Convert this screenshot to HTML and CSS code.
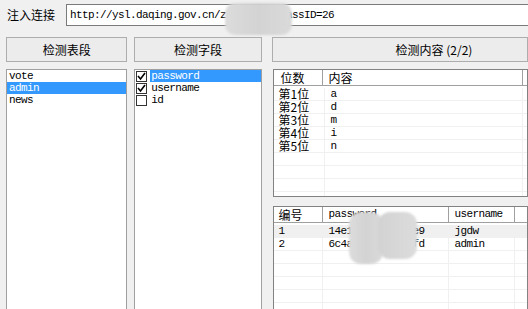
FILE: index.html
```html
<!DOCTYPE html>
<html lang="zh-CN">
<head>
  <meta charset="UTF-8">
  <title>注入检测</title>
  <link rel="stylesheet" href="styles.css">
</head>
<body>
  <div class="app">
    <div class="url-row">
      <span class="url-label">注入连接</span>
      <div class="url-box">http://ysl.daqing.gov.cn/zxxx.asp?ClassID=26</div>
    </div>

    <div class="panes">
      <div class="pane pane-tables">
        <div class="btn">检测表段</div>
        <div class="listbox">
          <div class="item">vote</div>
          <div class="item selected">admin</div>
          <div class="item">news</div>
        </div>
      </div>

      <div class="pane pane-fields">
        <div class="btn">检测字段</div>
        <div class="listbox">
          <div class="check-item">
            <span class="box"><svg width="9" height="9" viewBox="0 0 9 9"><polyline points="1,4 3.5,7 8,1" fill="none" stroke="#000" stroke-width="1.6"/></svg></span>
            <span class="check-text selected">password</span>
          </div>
          <div class="check-item">
            <span class="box"><svg width="9" height="9" viewBox="0 0 9 9"><polyline points="1,4 3.5,7 8,1" fill="none" stroke="#000" stroke-width="1.6"/></svg></span>
            <span class="check-text">username</span>
          </div>
          <div class="check-item">
            <span class="box"></span>
            <span class="check-text">id</span>
          </div>
        </div>
      </div>

      <div class="pane pane-content">
        <div class="btn btn-content">检测内容 (2/2)</div>

        <div class="grid grid-chars">
          <div class="grid-head">
            <div class="hcell c-pos cjk">位数</div>
            <div class="hcell c-val cjk">内容</div>
            <div class="hcell c-fill"></div>
          </div>
          <div class="grid-body">
            <div class="grow"><div class="cell c-pos cjk">第1位</div><div class="cell c-val">a</div><div class="cell c-fill"></div></div>
            <div class="grow"><div class="cell c-pos cjk">第2位</div><div class="cell c-val">d</div><div class="cell c-fill"></div></div>
            <div class="grow"><div class="cell c-pos cjk">第3位</div><div class="cell c-val">m</div><div class="cell c-fill"></div></div>
            <div class="grow"><div class="cell c-pos cjk">第4位</div><div class="cell c-val">i</div><div class="cell c-fill"></div></div>
            <div class="grow"><div class="cell c-pos cjk">第5位</div><div class="cell c-val">n</div><div class="cell c-fill"></div></div>
            <div class="grow"><div class="cell c-pos"></div><div class="cell c-val"></div><div class="cell c-fill"></div></div>
            <div class="grow"><div class="cell c-pos"></div><div class="cell c-val"></div><div class="cell c-fill"></div></div>
            <div class="grow"><div class="cell c-pos"></div><div class="cell c-val"></div><div class="cell c-fill"></div></div>
            <div class="grow"><div class="cell c-pos"></div><div class="cell c-val"></div><div class="cell c-fill"></div></div>
          </div>
        </div>

        <div class="grid grid-rows">
          <div class="grid-head">
            <div class="hcell c-id cjk">编号</div>
            <div class="hcell c-pass">password</div>
            <div class="hcell c-user">username</div>
            <div class="hcell c-fill"></div>
          </div>
          <div class="grid-body">
            <div class="grow current"><div class="cell c-id">1</div><div class="cell c-pass">14e1b600b1fd57e9</div><div class="cell c-user">jgdw</div><div class="cell c-fill"></div></div>
            <div class="grow"><div class="cell c-id">2</div><div class="cell c-pass">6c4a9f2e81b03dfd</div><div class="cell c-user">admin</div><div class="cell c-fill"></div></div>
            <div class="grow"><div class="cell c-id"></div><div class="cell c-pass"></div><div class="cell c-user"></div><div class="cell c-fill"></div></div>
            <div class="grow"><div class="cell c-id"></div><div class="cell c-pass"></div><div class="cell c-user"></div><div class="cell c-fill"></div></div>
            <div class="grow"><div class="cell c-id"></div><div class="cell c-pass"></div><div class="cell c-user"></div><div class="cell c-fill"></div></div>
            <div class="grow"><div class="cell c-id"></div><div class="cell c-pass"></div><div class="cell c-user"></div><div class="cell c-fill"></div></div>
            <div class="grow"><div class="cell c-id"></div><div class="cell c-pass"></div><div class="cell c-user"></div><div class="cell c-fill"></div></div>
          </div>
        </div>
      </div>
    </div>

    <!-- privacy blur over the url and the hashes -->
    <div class="mask mask-url"></div>
    <div class="mask mask-hash-a"></div>
    <div class="mask mask-hash-b"></div>
  </div>
</body>
</html>
```

FILE: styles.css
```css
* { box-sizing: border-box; margin: 0; padding: 0; }

body {
  background: #f0f0f0;
  font-family: "Liberation Mono", "Noto Sans CJK SC", monospace;
  font-size: 11px;
  letter-spacing: -0.6px;
  color: #000;
  overflow: hidden;
}

.cjk,
.url-label,
.btn {
  font-family: "Noto Sans CJK SC", sans-serif;
  font-size: 12px;
  letter-spacing: 0;
}

.app {
  position: relative;
  width: 528px;
  height: 309px;
  overflow: hidden;
}

/* top url row */
.url-row {
  display: flex;
  align-items: center;
  padding: 4px 0 0 7px;
}

.url-label {
  width: 59px;
  line-height: 22px;
}

.url-box {
  flex: 1;
  height: 22px;
  background: #fff;
  border: 1px solid #7a7a7a;
  border-right: none;
  padding-left: 3px;
  line-height: 20px;
  white-space: nowrap;
}

/* three panes */
.panes {
  display: flex;
  height: 283px;
  margin-top: 11px;
  padding-left: 6px;
}

.pane {
  display: flex;
  flex-direction: column;
}

.pane-tables { width: 122px; }
.pane-fields { width: 128px; margin-left: 7px; }
.pane-content { width: 258px; margin-left: 10px; }

.btn {
  height: 25px;
  margin-bottom: 7px;
  background: #ececec;
  border: 1px solid #adadad;
  text-align: center;
  line-height: 23px;
}

.btn-content {
  text-align: left;
  padding-left: 123px;
}

.listbox {
  flex: 1;
  background: #fff;
  border: 1px solid #a0a0a0;
}

.item {
  height: 12px;
  line-height: 12px;
  padding-left: 2px;
}

.selected {
  background: #3399ff;
  color: #fff;
}

.check-item {
  display: flex;
  align-items: center;
  height: 12px;
}

.box {
  width: 11px;
  height: 11px;
  margin: 0 3px 0 1px;
  border: 1px solid #333;
  background: #fff;
  display: flex;
  align-items: center;
  justify-content: center;
}

.check-text {
  flex: 1;
  height: 12px;
  line-height: 12px;
  padding-left: 1px;
}

/* result grids */
.grid {
  background: #fff;
  border: 1px solid #828282;
  margin-left: 1px;
  overflow: hidden;
}

.grid-chars { height: 128px; }
.grid-rows { flex: 1; margin-top: 9px; }

.grid-head {
  display: flex;
  height: 16px;
}

.hcell {
  height: 16px;
  line-height: 15px;
  border-right: 1px solid #a0a0a0;
  border-bottom: 1px solid #a0a0a0;
  white-space: nowrap;
}

.grid-body {
  padding-top: 2px;
}

.grow {
  display: flex;
  height: 13px;
  border-bottom: 1px solid #f0f0f0;
}

.grow.current {
  background: #f0f0f0;
}

.cell {
  height: 12px;
  line-height: 12px;
  border-right: 1px solid #f0f0f0;
  white-space: nowrap;
}

.grow .cjk { font-size: 12px; line-height: 12px; }

.c-pos { width: 51px; padding-left: 5px; }
.c-val { width: 198px; padding-left: 6px; }
.hcell.c-pos { width: 49px; padding-left: 7px; }
.hcell.c-val { width: 200px; padding-left: 6px; }
.c-fill { flex: 1; border-right: none; }

.c-id { width: 49px; padding-left: 5px; }
.c-pass { width: 126px; padding-left: 6px; }
.c-user { width: 66px; padding-left: 6px; }

/* blurred privacy masks */
.mask {
  position: absolute;
  background: linear-gradient(90deg, #dcdcdc, #d3d3d3 50%, #dadada);
  filter: blur(0.8px);
}

.mask-url {
  left: 225px;
  top: 3px;
  width: 67px;
  height: 32px;
  border-radius: 10px;
}

.mask-hash-a {
  left: 349px;
  top: 212px;
  width: 34px;
  height: 52px;
  border-radius: 12px;
}

.mask-hash-b {
  left: 378px;
  top: 212px;
  width: 39px;
  height: 47px;
  border-radius: 12px;
  background: linear-gradient(90deg, #d2d2d2, #dcdcdc);
}
```
